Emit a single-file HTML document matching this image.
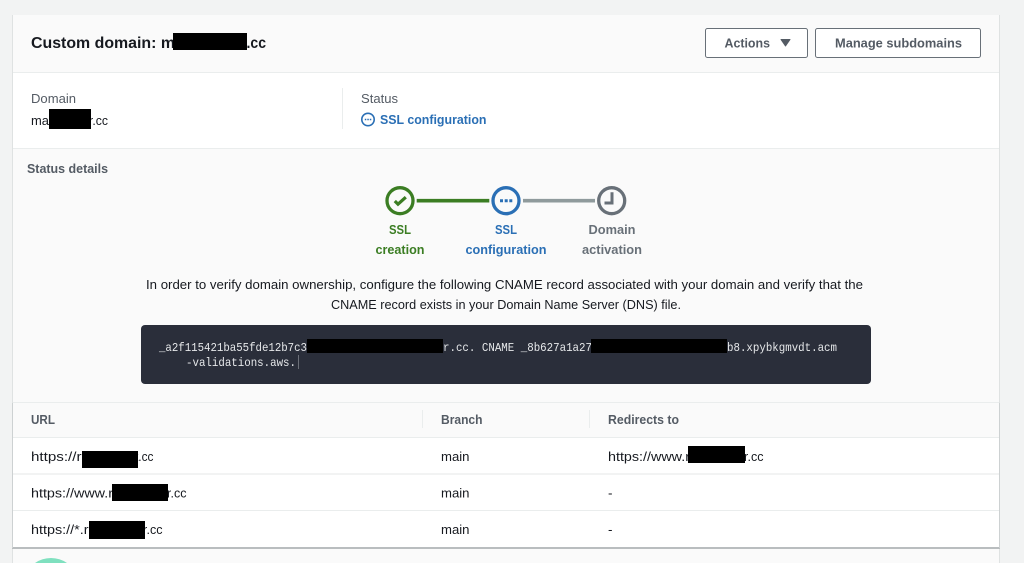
<!DOCTYPE html>
<html><head><meta charset="utf-8"><title>Custom domain</title>
<style>
html,body{margin:0;padding:0;width:1024px;height:563px;overflow:hidden;background:#f2f3f3}
svg{display:block;position:absolute;left:0;top:0;overflow:hidden}
text{font-family:"Liberation Sans",sans-serif;font-size:13px;fill:#16191f}
.b{font-weight:700}
.g{fill:#545b64}
.m{font-family:"Liberation Mono",monospace;font-size:12px;fill:#e6e8ea}
</style></head><body>
<svg width="1024" height="563" viewBox="0 0 1024 563" xmlns="http://www.w3.org/2000/svg">
<rect width="1024" height="563" fill="#f2f3f3"/>
<!-- card -->
<rect x="12" y="15" width="988" height="548" fill="#dfe2e2"/>
<rect x="13" y="15" width="986" height="548" fill="#fafafa"/>
<rect x="13" y="73" width="986" height="75" fill="#fff"/>
<rect x="13" y="72" width="986" height="1" fill="#eaeded"/>
<rect x="13" y="148" width="986" height="1" fill="#eaeded"/>
<!-- header -->
<text x="31" y="48" class="b" style="font-size:16px" textLength="144" lengthAdjust="spacingAndGlyphs">Custom domain: m</text>
<text x="246.500" y="48" class="b" style="font-size:16px" textLength="19.500" lengthAdjust="spacingAndGlyphs">.cc</text>
<rect x="173" y="33" width="74" height="17" fill="#000"/>
<rect x="705.500" y="28.500" width="102" height="29" rx="2" fill="#fff" stroke="#687078"/>
<rect x="815.500" y="28.500" width="165" height="29" rx="2" fill="#fff" stroke="#687078"/>
<text x="724.500" y="47.500" class="b g" style="font-size:12.500px" textLength="45.500" lengthAdjust="spacingAndGlyphs">Actions</text>
<path d="M781 39.500h9l-4.500 6.500z" fill="#545b64" stroke="#545b64" stroke-width="1" stroke-linejoin="round"/>
<text x="835" y="47.500" class="b g" style="font-size:12.500px" textLength="127" lengthAdjust="spacingAndGlyphs">Manage subdomains</text>
<!-- summary -->
<text x="31" y="103" class="g" textLength="45" lengthAdjust="spacingAndGlyphs">Domain</text>
<text x="31" y="125" textLength="18" lengthAdjust="spacingAndGlyphs">ma</text>
<text x="89" y="125" textLength="19" lengthAdjust="spacingAndGlyphs">r.cc</text>
<rect x="49" y="109" width="42" height="20" fill="#000"/>
<rect x="342" y="88" width="1" height="41" fill="#eaeded"/>
<text x="361" y="103" class="g" textLength="37" lengthAdjust="spacingAndGlyphs">Status</text>
<circle cx="368" cy="119.500" r="6.200" fill="none" stroke="#2a6fb5" stroke-width="1.600"/>
<path d="M364.800 119.500h1.500M367.300 119.500h1.500M369.800 119.500h1.500" stroke="#2a6fb5" stroke-width="1.600"/>
<text x="380" y="124" class="b" style="fill:#2a6fb5" textLength="106.500" lengthAdjust="spacingAndGlyphs">SSL configuration</text>
<!-- status details -->
<text x="27" y="173" class="b g" style="font-size:12.500px" textLength="81" lengthAdjust="spacingAndGlyphs">Status details</text>
<path d="M416.700 200.700h72.600" stroke="#3b7d23" stroke-width="3.600"/>
<path d="M523 200.700h72" stroke="#8f9a9c" stroke-width="3.600"/>
<circle cx="400" cy="200.700" r="13" fill="none" stroke="#3b7d23" stroke-width="3.300"/>
<path d="M394.800 201l3.200 3.200 7.800-7" fill="none" stroke="#3b7d23" stroke-width="3.200"/>
<circle cx="506" cy="200.700" r="13" fill="none" stroke="#2a6fb5" stroke-width="3.300"/>
<path d="M500 200.700h3M504.700 200.700h3M509.300 200.700h3" stroke="#2a6fb5" stroke-width="3"/>
<circle cx="611.700" cy="200.700" r="13" fill="none" stroke="#687078" stroke-width="3.300"/>
<path d="M612 192.300v10.700h-7.500" fill="none" stroke="#687078" stroke-width="3"/>
<text x="389" y="234" class="b" style="fill:#3b7d23" textLength="22" lengthAdjust="spacingAndGlyphs">SSL</text>
<text x="375.500" y="254" class="b" style="fill:#3b7d23" textLength="49" lengthAdjust="spacingAndGlyphs">creation</text>
<text x="495" y="234" class="b" style="fill:#2a6fb5" textLength="22" lengthAdjust="spacingAndGlyphs">SSL</text>
<text x="465.500" y="254" class="b" style="fill:#2a6fb5" textLength="81" lengthAdjust="spacingAndGlyphs">configuration</text>
<text x="588.500" y="234" class="b" style="fill:#687078" textLength="47" lengthAdjust="spacingAndGlyphs">Domain</text>
<text x="582" y="254" class="b" style="fill:#687078" textLength="60" lengthAdjust="spacingAndGlyphs">activation</text>
<text x="146" y="289" textLength="717" lengthAdjust="spacingAndGlyphs">In order to verify domain ownership, configure the following CNAME record associated with your domain and verify that the</text>
<text x="331" y="309" textLength="350" lengthAdjust="spacingAndGlyphs">CNAME record exists in your Domain Name Server (DNS) file.</text>
<!-- code -->
<rect x="141" y="325" width="730" height="59" rx="4" fill="#2a2e3a"/>
<text x="159" y="351" class="m" textLength="148" lengthAdjust="spacingAndGlyphs">_a2f115421ba55fde12b7c3</text>
<text x="443" y="351" class="m" textLength="149" lengthAdjust="spacingAndGlyphs">r.cc. CNAME _8b627a1a27</text>
<text x="727" y="351" class="m" textLength="110" lengthAdjust="spacingAndGlyphs">b8.xpybkgmvdt.acm</text>
<text x="186" y="366" class="m" textLength="110" lengthAdjust="spacingAndGlyphs">-validations.aws.</text>
<rect x="298" y="355" width="1" height="14" fill="#6b6f78"/>
<rect x="307" y="339" width="136" height="14" fill="#000"/>
<rect x="591" y="339" width="136" height="14" fill="#000"/>
<!-- table -->
<rect x="13" y="402" width="986" height="1" fill="#eaeded"/>
<rect x="13" y="437" width="986" height="111" fill="#fff"/>
<rect x="13" y="437" width="986" height="1" fill="#eaeded"/>
<rect x="13" y="473" width="986" height="2" fill="#f2f3f3"/>
<rect x="13" y="510" width="986" height="1" fill="#eaeded"/>
<rect x="12" y="547" width="988" height="2" fill="#b9bdbf"/>
<rect x="999" y="403" width="1" height="145" fill="#cdd1d2"/>
<rect x="12" y="403" width="1" height="145" fill="#cdd1d2"/>
<rect x="422" y="410" width="1" height="18" fill="#eaeded"/>
<rect x="589" y="410" width="1" height="18" fill="#eaeded"/>
<text x="31" y="424" class="b g" style="font-size:12.500px" textLength="24" lengthAdjust="spacingAndGlyphs">URL</text>
<text x="441" y="424" class="b g" style="font-size:12.500px" textLength="41.500" lengthAdjust="spacingAndGlyphs">Branch</text>
<text x="608" y="424" class="b g" style="font-size:12.500px" textLength="71" lengthAdjust="spacingAndGlyphs">Redirects to</text>
<text x="31" y="461" textLength="50.500" lengthAdjust="spacingAndGlyphs">https://r</text>
<text x="135" y="461" textLength="18.500" lengthAdjust="spacingAndGlyphs">t.cc</text>
<rect x="82" y="451" width="56" height="17" fill="#000"/>
<text x="441" y="461" textLength="28.500" lengthAdjust="spacingAndGlyphs">main</text>
<text x="608" y="461" textLength="82" lengthAdjust="spacingAndGlyphs">https://www.r</text>
<text x="744" y="461" textLength="19.500" lengthAdjust="spacingAndGlyphs">r.cc</text>
<rect x="688" y="446" width="57" height="17" fill="#000"/>
<text x="31" y="497.500" textLength="82" lengthAdjust="spacingAndGlyphs">https://www.r</text>
<text x="167" y="497.500" textLength="19.500" lengthAdjust="spacingAndGlyphs">r.cc</text>
<rect x="112" y="484" width="56" height="17" fill="#000"/>
<text x="441" y="497.500" textLength="28.500" lengthAdjust="spacingAndGlyphs">main</text>
<text x="608" y="497.500" textLength="4.500" lengthAdjust="spacingAndGlyphs">-</text>
<text x="31" y="534" textLength="57.500" lengthAdjust="spacingAndGlyphs">https://*.r</text>
<text x="143" y="534" textLength="19.500" lengthAdjust="spacingAndGlyphs">r.cc</text>
<rect x="89" y="521" width="56" height="18" fill="#000"/>
<text x="441" y="534" textLength="28.500" lengthAdjust="spacingAndGlyphs">main</text>
<text x="608" y="534" textLength="4.500" lengthAdjust="spacingAndGlyphs">-</text>
<path d="M35 563A28 28 0 0 1 67 563Z" fill="#7fe0bf"/>
</svg>
</body></html>
